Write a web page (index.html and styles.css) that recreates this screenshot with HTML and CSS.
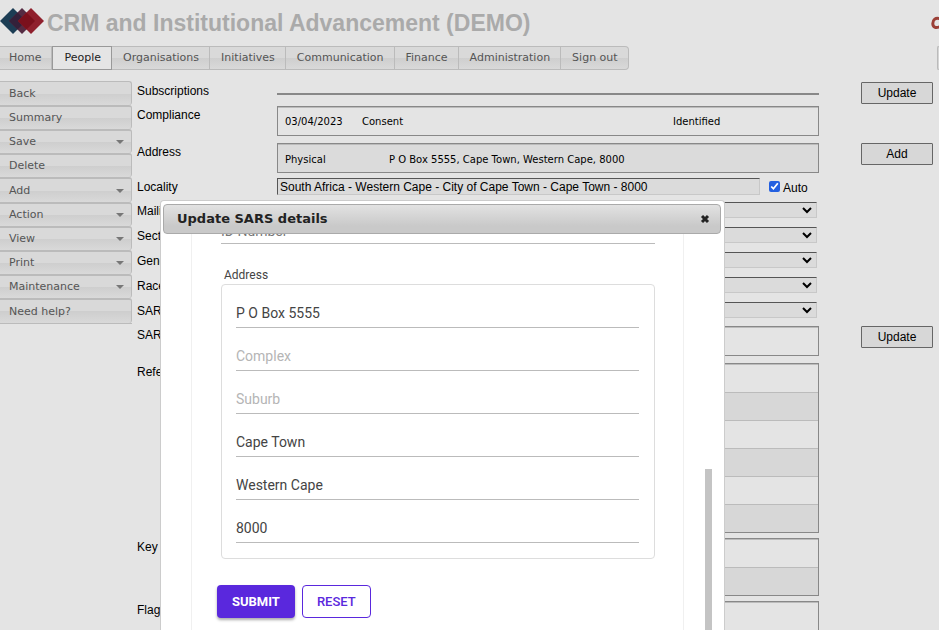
FILE: index.html
```html
<!DOCTYPE html>
<html lang="en">
<head>
<meta charset="utf-8">
<title>CRM and Institutional Advancement (DEMO)</title>
<link rel="stylesheet" href="styles.css">
</head>
<body>
<header class="banner">
  <svg class="logo" viewBox="0 0 44 28" width="44" height="28" aria-hidden="true">
    <path d="M13 1L26 14L13 27L0 14Z" fill="#1c3d54"/>
    <path d="M22 1L35 14L22 27L9 14Z" fill="#552b42"/>
    <path d="M17.500 5.500L26 14L17.500 22.500L9 14Z" fill="#34213a"/>
    <path d="M31 1L44 14L31 27L18 14Z" fill="#8f202d"/>
    <path d="M26.500 5.500L35 14L26.500 22.500L18 14Z" fill="#7b101c"/>
  </svg>
  <h1>CRM and Institutional Advancement (DEMO)</h1>
  <svg class="brand" viewBox="0 0 8 14" width="8" height="14" aria-hidden="true">
    <path d="M9 2.800C4.500 1 1.800 4 1.800 7.500C1.800 11 4.500 12.600 9 10.600" fill="none" stroke="#9b4037" stroke-width="3"/>
  </svg>
</header>
<nav class="tabs">
  <a href="#">Home</a><a href="#" class="current">People</a><a href="#">Organisations</a><a href="#">Initiatives</a><a href="#">Communication</a><a href="#">Finance</a><a href="#">Administration</a><a href="#">Sign out</a>
  <span class="tab-edge"></span>
</nav>
<div class="page">
  <nav class="side">
    <a href="#">Back</a>
    <a href="#">Summary</a>
    <a href="#" class="more">Save</a>
    <a href="#">Delete</a>
    <a href="#" class="more">Add</a>
    <a href="#" class="more">Action</a>
    <a href="#" class="more">View</a>
    <a href="#" class="more">Print</a>
    <a href="#" class="more">Maintenance</a>
    <a href="#">Need help?</a>
  </nav>
  <main class="record">
    <div class="row short"><span>Subscriptions</span><div class="rule"></div><button class="action">Update</button></div>
    <div class="row"><span>Compliance</span>
      <table class="list compliance"><tr><td>03/04/2023</td><td>Consent</td><td>Identified</td></tr></table>
    </div>
    <div class="row tight"><span>Address</span>
      <table class="list address"><tr class="alt"><td>Physical</td><td>P O Box 5555, Cape Town, Western Cape, 8000</td></tr></table>
      <button class="action">Add</button>
    </div>
    <div class="row short"><label for="locality">Locality</label>
      <div class="locality"><input id="locality" type="text" value="South Africa - Western Cape - City of Cape Town - Cape Town - 8000"><label class="auto"><input type="checkbox" checked><span>Auto</span></label></div>
    </div>
    <div class="row field"><label for="mailing">Mailing</label><select id="mailing"><option></option></select></div>
    <div class="row field"><label for="sector">Sector</label><select id="sector"><option></option></select></div>
    <div class="row field"><label for="gender">Gender</label><select id="gender"><option></option></select></div>
    <div class="row field"><label for="race">Race</label><select id="race"><option></option></select></div>
    <div class="row field last"><label for="sars">SARS</label><select id="sars"><option></option></select></div>
    <div class="row"><span>SARS</span><table class="list"><tr><td></td></tr></table><button class="action">Update</button></div>
    <div class="row tight"><span>References</span>
      <table class="list"><tr><td></td></tr><tr class="alt"><td></td></tr><tr><td></td></tr><tr class="alt"><td></td></tr><tr><td></td></tr><tr class="alt"><td></td></tr></table>
    </div>
    <div class="row tight"><span>Key</span><table class="list"><tr><td></td></tr><tr class="alt"><td></td></tr></table></div>
    <div class="row"><span>Flags</span><table class="list"><tr><td></td></tr></table></div>
  </main>
</div>
<section class="dialog" role="dialog" aria-labelledby="dialog-title">
  <header class="dialog-bar">
    <h2 id="dialog-title">Update SARS details</h2>
    <button class="close" aria-label="Close"><svg viewBox="0 0 10 10" width="10" height="10"><path d="M2 2L8 8M8 2L2 8" stroke="#222" stroke-width="3"/></svg></button>
  </header>
  <div class="dialog-body">
    <form class="details">
      <input class="line" type="text" placeholder="ID Number" aria-label="ID Number">
      <h3>Address</h3>
      <div class="group">
        <input class="line" type="text" value="P O Box 5555" aria-label="Street">
        <input class="line" type="text" placeholder="Complex" aria-label="Complex">
        <input class="line" type="text" placeholder="Suburb" aria-label="Suburb">
        <input class="line" type="text" value="Cape Town" aria-label="City">
        <input class="line" type="text" value="Western Cape" aria-label="Province">
        <input class="line" type="text" value="8000" aria-label="Postal code">
      </div>
      <div class="buttons"><button type="submit" class="submit">SUBMIT</button><button type="reset" class="reset">RESET</button></div>
    </form>
    <div class="scroll-thumb"></div>
  </div>
</section>
</body>
</html>
```
FILE: styles.css
```css
* { box-sizing: border-box; }
body {
  margin: 0;
  height: 100vh;
  overflow: hidden;
  position: relative;
  background: #e4e4e4;
  color: #000;
  font: 12px/18px "Liberation Sans", Arial, sans-serif;
}

.banner { display: flex; align-items: center; height: 46px; padding-bottom: 4px; }
.banner h1 { flex: 1; margin: 4px 0 0 3px; font-size: 23px; line-height: 30px; color: #aaa; white-space: nowrap; }
.banner .brand { margin-top: 4px; }

.tabs, .side { font: 11px/22px "DejaVu Sans", Verdana, sans-serif; }
.tabs { display: flex; height: 24px; }
.tabs a, .side a {
  color: #555;
  text-decoration: none;
  border: 1px solid #bbb;
  border-left: 0;
  background: linear-gradient(#d9d9d9 0 50%, #cecece 50%, #d9d9d9);
}
.tabs a { padding: 0 10px 0 11px; }
.tabs a:first-child { padding-left: 9px; }
.tabs a:nth-last-child(2) { border-radius: 0 4px 4px 0; }
.tabs .current { color: #222; border: 1px solid #999; background: #e5e5e5; }
.tab-edge { width: 2px; margin-left: auto; border: 1px solid #bbb; border-right: 0; border-radius: 3px 0 0 3px; background: #d5d5d5; }

.page { display: flex; align-items: flex-start; padding-top: 11px; }
.side { width: 132px; border-bottom: 1px solid #bbb; }
.side a {
  display: flex;
  align-items: center;
  justify-content: space-between;
  height: 24px;
  padding: 0 7px 0 9px;
  border-bottom: 0;
  border-top: 2px solid #bbb;
  border-radius: 0 3px 3px 0;
}
.side a:first-child { border-top-width: 1px; }
.side a:nth-child(5n) { height: 25px; }
.more::after { content: ""; border: 4px solid transparent; border-top-color: #777; border-bottom: 0; }

.record { flex: 1; padding: 1px 6px 0 5px; }
.row {
  display: grid;
  grid-template-columns: 140px 1fr 72px;
  align-items: start;
  padding-bottom: 7px;
}
.row > :nth-child(2) { margin-right: 42px; }
.tight { padding-bottom: 5px; }
.short { height: 24px; padding: 0; }
.field { height: 25px; padding: 0; }
.field.last { height: 24px; }
.rule { margin-top: 11px; border-top: 2px solid #888; }
.action {
  height: 22px;
  border: 1px solid #666;
  border-radius: 1px;
  background: #d7d7d7;
  font: 12px/18px "Liberation Sans", Arial, sans-serif;
  padding: 0;
}

.list { width: calc(100% - 42px); border: 1px solid #888; border-spacing: 0; font: 10px/14px "DejaVu Sans", Verdana, sans-serif; }
.list td { height: 28px; padding: 0 7px; border-top: 1px solid #bbb; }
.alt td { background: #d7d7d7; }
.address .alt td { background: #dbdbdb; padding-top: 2px; }
.compliance td:nth-child(1) { width: 77px; }
.address td:nth-child(1) { width: 104px; }
.compliance td:nth-child(3) { width: 152px; }

.locality { display: flex; align-items: flex-start; }
.locality > input {
  flex: 1;
  height: 17px;
  padding: 0 2px;
  border: 1px solid #c8c8c8;
  border-top-color: #555;
  border-left-color: #555;
  background: #dbdbdb;
  font: 12px/14px "Liberation Sans", Arial, sans-serif;
}
.auto { display: flex; align-items: flex-start; width: 59px; padding-left: 9px; gap: 3px; }
.auto input { width: 11px; height: 11px; margin: 3px 0 0; accent-color: #2460e0; }
.auto span { padding-top: 1px; }
.row.field select {
  appearance: none;
  height: 16px;
  margin-right: 44px;
  border: 1px solid #c8c8c8;
  border-top-color: #555;
  background: #dbdbdb url('data:image/svg+xml,<svg xmlns="http://www.w3.org/2000/svg" width="10" height="7"><path d="M1 1L5 5L9 1" fill="none" stroke="black" stroke-width="2"/></svg>') no-repeat right 4px center;
}

.dialog {
  position: absolute;
  top: 200px;
  left: 160px;
  right: 214px;
  bottom: 0;
  display: flex;
  flex-direction: column;
  padding: 3px 3px 0 2px;
  background: #fff;
  border: 1px solid #ccc;
  border-bottom: 0;
  border-radius: 4px 4px 0 0;
}
.dialog-bar {
  display: flex;
  align-items: center;
  justify-content: space-between;
  flex: none;
  height: 30px;
  padding: 0 10px 0 13px;
  border: 1px solid #aaa;
  border-radius: 4px;
  background: linear-gradient(#e2e2e2, #c9c9c9 75%);
}
.dialog-bar h2 { margin: 0; font: bold 13px/18px "DejaVu Sans", Verdana, sans-serif; color: #222; }
.close { display: flex; padding: 0; border: 0; background: none; }
.dialog-body { display: flex; flex: 1; min-height: 0; overflow: hidden; }
.details {
  flex: 1;
  margin: -20px 21px 0 28px;
  padding: 0 28px 0 29px;
  border: solid #f0f0f0;
  border-width: 0 1px;
  font-family: Roboto, sans-serif;
}
.line {
  display: block;
  width: 100%;
  height: 30px;
  padding: 0;
  border: 0;
  border-bottom: 1px solid #bbb;
  background: none;
  color: #444;
  font: 14px/20px Roboto, sans-serif;
}
.line::placeholder { color: #b5b5b5; }
.details > .line { padding-top: 4px; }
.details > .line::placeholder { color: #777; }
.details h3 { margin: 22px 0 0 3px; font-size: 12px; line-height: 18px; font-weight: 400; color: #444; }
.group {
  display: flex;
  flex-direction: column;
  gap: 13px;
  padding: 13px 15px 15px 14px;
  border: 1px solid #ddd;
  border-radius: 4px;
}
.buttons { display: flex; gap: 7px; margin: 26px 0 0 -4px; }
.buttons button { height: 33px; padding: 0 14px; border-radius: 4px; font: 500 13px/18px Roboto, sans-serif; }
.buttons .submit { padding: 0 15px; border: 0; background: #5a28dd; color: #fff; font-weight: 700; box-shadow: 0 2px 3px #0005; }
.reset { border: 1px solid #5a28dd; background: #fff; color: #5a28dd; }
.scroll-thumb { align-self: flex-end; width: 7px; height: calc(41% - 1px); margin-right: 9px; background: #c4c4c4; }
```
